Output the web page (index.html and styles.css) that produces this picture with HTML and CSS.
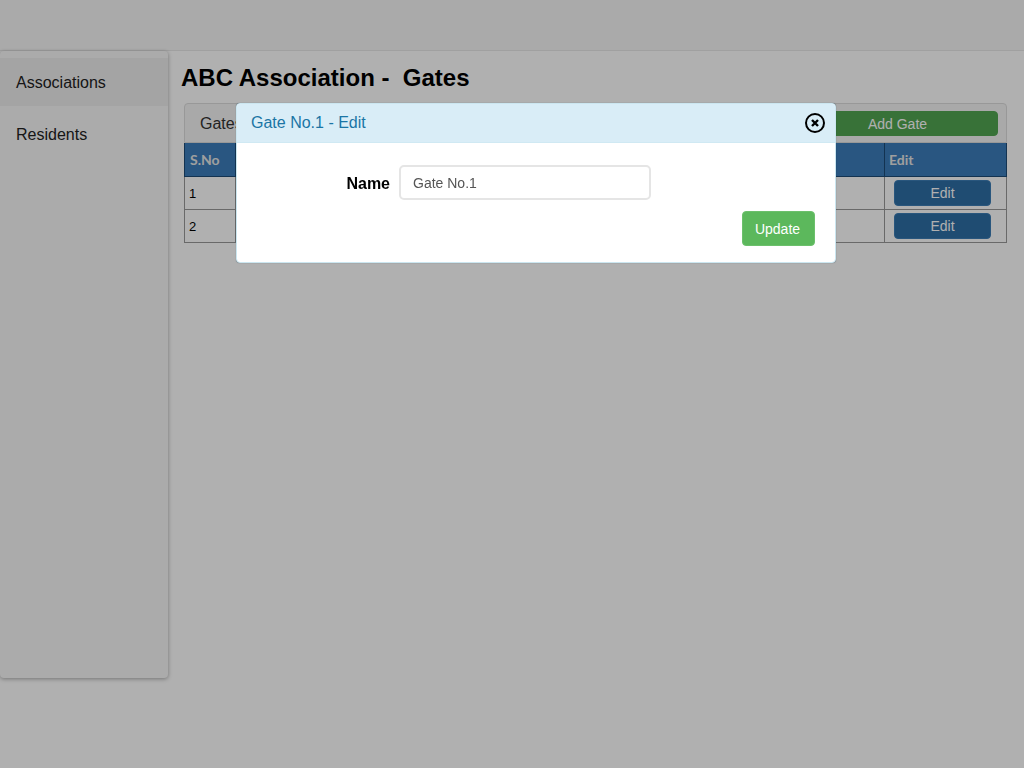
FILE: index.html
```html
<!DOCTYPE html>
<html lang="en">
<head>
<meta charset="utf-8">
<title>ABC Association - Gates</title>
<link rel="stylesheet" href="styles.css">
</head>
<body>
<header class="topbar"></header>
<div class="layout">
  <nav class="sidebar">
    <a class="nav-item active">Associations</a>
    <a class="nav-item">Residents</a>
  </nav>
  <main class="content">
    <h1 class="title">ABC Association -&nbsp; Gates</h1>
    <section class="panel">
      <div class="panel-head">
        <span class="panel-title">Gates</span>
        <button class="btn btn-add">Add Gate</button>
      </div>
      <table class="grid">
        <thead>
          <tr><th class="col-sno">S.No</th><th>Name</th><th class="col-edit">Edit</th></tr>
        </thead>
        <tbody>
          <tr><td>1</td><td>Gate No.1</td><td class="cell-edit"><button class="btn btn-edit">Edit</button></td></tr>
          <tr><td>2</td><td>Gate No.2</td><td class="cell-edit"><button class="btn btn-edit">Edit</button></td></tr>
        </tbody>
      </table>
    </section>
  </main>
</div>
<div class="backdrop"></div>
<div class="modal">
  <div class="modal-head">
    <span class="modal-title">Gate No.1 - Edit</span>
    <svg class="close-icon" width="22" height="22" viewBox="0 0 22 22" aria-hidden="true">
      <circle cx="11" cy="11" r="9" fill="none" stroke="#000" stroke-width="2"/>
      <path d="M8 8l6 6M14 8l-6 6" fill="none" stroke="#000" stroke-width="2.4"/>
    </svg>
  </div>
  <div class="modal-body">
    <div class="form-row">
      <label class="form-label">Name</label>
      <input class="form-input" type="text" value="Gate No.1">
    </div>
    <div class="form-actions">
      <button class="btn btn-update">Update</button>
    </div>
  </div>
</div>
</body>
</html>
```
FILE: styles.css
```css
* { box-sizing: border-box; }
html, body { height: 100%; }
body {
  margin: 0;
  height: 768px;
  overflow: hidden;
  background: #fff;
  font-family: "Liberation Sans", Arial, sans-serif;
  color: #000;
}
.topbar {
  height: 51px;
  background: #f7f7f7;
  border-bottom: 1px solid #e8e8e8;
}
.layout { display: flex; align-items: flex-start; }
.sidebar {
  width: 168px;
  height: 627px;
  padding-top: 7px;
  background: #f8f8f8;
  border-radius: 4px;
  box-shadow: 0 1px 4px rgba(0,0,0,.35);
  display: flex;
  flex-direction: column;
  gap: 4px;
}
.nav-item {
  height: 48px;
  padding: 1px 0 0 16px;
  display: flex;
  align-items: center;
  font-size: 16px;
  color: #222;
}
.nav-item.active { background: #eee; }
.content { flex: 1; padding: 0 17px 0 13px; }
.title {
  margin: 11px 0 10px;
  font-size: 24px;
  line-height: 31px;
  font-weight: bold;
}
.panel {
  margin-left: 3px;
  width: 823px;
}
.panel-head {
  height: 40px;
  padding: 7px 8px 0 15px;
  display: flex;
  justify-content: space-between;
  background: #f5f5f5;
  border: 1px solid #ddd;
  border-radius: 4px 4px 0 0;
}
.panel-title { font-size: 16px; line-height: 26px; color: #333; }
.btn {
  border: 1px solid transparent;
  border-radius: 4px;
  font-family: inherit;
  font-size: 14px;
  color: #fff;
  padding: 0;
}
.btn-add { width: 201px; height: 25px; background: #52a652; border-color: #52a652; }
.grid {
  width: 100%;
  border-collapse: separate;
  border-spacing: 0;
  table-layout: fixed;
  font-size: 13px;
}
.grid th {
  height: 34px;
  padding: 0 4px 0 5px;
  text-align: left;
  font-family: Lato, sans-serif;
  font-size: 14px;
  background: #3c7dbb;
  color: #e6e6e6;
  border-bottom: 1px solid #1c4a76;
  border-right: 1px solid #1c4a76;
}
.grid th:first-child { border-left: 1px solid #1c4a76; }
.grid th.col-edit { padding-left: 4px; }
.grid td {
  height: 33px;
  padding: 0 4px;
  border-right: 1px solid #999;
  border-bottom: 1px solid #999;
}
.grid td:first-child { border-left: 1px solid #999; }
.col-sno { width: 52px; }
.col-edit { width: 122px; }
.grid td.cell-edit { padding: 0 0 0 9px; }
.btn-edit { display: block; width: 97px; height: 26px; background: #2d6ea6; border-color: #3c7db5; }
.backdrop {
  position: fixed;
  inset: 0;
  background: rgba(0,0,0,.31);
}
.modal {
  position: absolute;
  left: 236px;
  top: 103px;
  width: 600px;
  height: 160px;
  background: #fff;
  border: 1px solid #cbe6f0;
  border-radius: 4px;
  box-shadow: 0 0 1px rgba(0,40,60,.5);
  overflow: hidden;
}
.modal-head {
  height: 39px;
  padding: 0 9px 0 14px;
  display: flex;
  align-items: center;
  justify-content: space-between;
  background: #d9edf7;
  border-bottom: 1px solid #d0e9f3;
}
.modal-title { font-size: 16px; color: #1b75a5; }
.modal-body { padding: 22px 20px 0 0; }
.form-row { display: flex; align-items: center; }
.form-label {
  width: 153px;
  padding-top: 3px;
  text-align: right;
  font-size: 16px;
  font-weight: bold;
}
.form-input {
  margin-left: 9px;
  width: 252px;
  height: 35px;
  padding: 0 12px;
  border: 2px solid #e5e5e5;
  border-radius: 5px;
  font-family: inherit;
  font-size: 14px;
  color: #555;
}
.form-actions { display: flex; justify-content: flex-end; margin-top: 11px; }
.btn-update { width: 73px; height: 35px; padding-right: 2px; background: #5cb85c; border-color: #6cc06c; }
```
